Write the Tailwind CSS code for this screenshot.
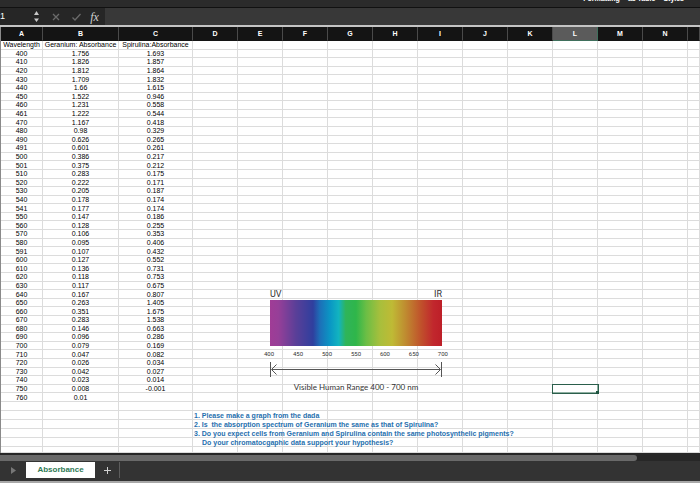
<!DOCTYPE html>
<html lang="en">

<head>
  <meta charset="UTF-8" />
  <meta name="viewport" content="width=device-width, initial-scale=1.0" />
  <title>Absorbance</title>
  <script src="https://cdn.jsdelivr.net/npm/@tailwindcss/browser@4"></script>
</head>

<body class="min-h-screen flex flex-col bg-[#333333] font-['Liberation_Sans',Arial,sans-serif] text-[7px] overflow-x-hidden">

  <!-- Bottom edge of the ribbon -->
  <header class="h-[8px] flex items-end justify-end gap-2 pr-4 pb-1 overflow-hidden bg-[#2b2b2b] border-b border-[#111111] leading-[8px] font-bold text-white">
    <span>Formatting</span>
    <span>as Table</span>
    <span>Styles</span>
  </header>

  <!-- Formula bar -->
  <div class="h-[17px] flex items-stretch bg-[#262626]">
    <input aria-label="Name box" value="1" class="w-7 text-[9px] text-white outline-none" />
    <button aria-label="Open name list" class="w-4 flex items-center justify-center">
      <svg class="w-[5px] h-[13px]" viewBox="0 0 5 13" fill="#c9c9c9">
        <path d="M2.5 1 5 5H0zM2.5 12 0 8.500h5z" />
      </svg>
    </button>
    <button aria-label="Cancel" class="w-6 flex items-center justify-center">
      <svg class="w-2 h-2" viewBox="0 0 8 8" stroke="#6a6a6a" stroke-width="1.300">
        <path d="M1 1l6 6M7 1L1 7" />
      </svg>
    </button>
    <button aria-label="Enter" class="w-4 flex items-center justify-center">
      <svg class="w-[9px] h-2" viewBox="0 0 9 8" fill="none" stroke="#6a6a6a" stroke-width="1.300">
        <path d="M.5 4.500 3 7l5.500-6" />
      </svg>
    </button>
    <button aria-label="Insert function" class="w-[21px] text-[12px] leading-[14px] italic font-['Liberation_Serif',serif] text-[#d0d0d0]">fx</button>
    <input aria-label="Formula" class="flex-1 min-w-0 bg-[#383838] outline-none" />
  </div>

  <!-- Worksheet -->
  <main class="relative bg-white border-t-2 border-[#c4c4c4] overflow-hidden">
    <table class="w-full h-[426px] table-fixed border-separate border-spacing-0 border-l border-[#8a8a8a] text-center text-black leading-[7px]">
      <colgroup>
        <col class="w-[42px]" />
        <col class="w-[76px]" />
        <col class="w-[74px]" />
        <col class="w-[45px]" span="11" />
        <col />
      </colgroup>
      <thead id="columnHeads" class="text-white"></thead>
      <tbody id="sheetRows"></tbody>
    </table>

    <!-- Spectrum chart floating over the cells -->
    <figure class="absolute left-[264px] top-[261px] w-[184px] font-['Roboto',sans-serif] text-[#333333]">
      <div class="flex justify-between px-1.5 text-[9px] leading-[12px]">
        <span>UV</span>
        <span>IR</span>
      </div>
      <div class="mx-1.5 h-[46px] bg-[linear-gradient(90deg,#a03c96_0%,#963f98_5%,#5a3f98_15%,#2f3f9e_25%,#1d6fb8_29%,#0a97c4_35%,#12b4c0_40%,#2fb45a_44%,#2fb64a_50%,#6cbe45_56%,#a8bf3c_64%,#bfba35_71%,#bf8a30_79%,#c0502b_88%,#c1272d_95%,#bd1f28_100%)]"></div>
      <div class="mt-1 flex justify-between text-[6px] leading-[8px]">
        <span>400</span>
        <span>450</span>
        <span>500</span>
        <span>550</span>
        <span>600</span>
        <span>650</span>
        <span>700</span>
      </div>
      <svg class="mt-1 mx-1.5 w-[172px] h-[15px]" viewBox="0 0 172 15" fill="none" stroke="#555555">
        <path d="M.5 0v15M171.500 0v15M2 7.500h168M6.500 2.500l-5 5 5 5M165.500 2.500l5 5-5 5" />
      </svg>
      <figcaption class="mt-1 text-center font-['Lato',sans-serif] text-[8px] leading-[12px] whitespace-nowrap">Visible Human Range 400 - 700 nm</figcaption>
    </figure>

    <!-- Assignment questions -->
    <ol class="absolute left-[194px] top-[384px] font-bold text-[7px] leading-[9px] text-[#1f6fae]">
      <li class="whitespace-pre">1. Please make a graph from the dada</li>
      <li class="whitespace-pre">2. Is  the absorption spectrum of Geranium the same as that of Spirulina?</li>
      <li class="whitespace-pre">3. Do you expect cells from Geranium and Spirulina contain the same photosynthelic pigments?</li>
      <li class="whitespace-pre pl-2">Do your chromatocgaphic data support your hypothesis?</li>
    </ol>
  </main>

  <!-- Horizontal scrollbar -->
  <div class="h-[8px] pt-0.5 bg-[#272727]">
    <div class="h-1.5 w-[91%] rounded-r-full bg-[#696969]"></div>
  </div>

  <!-- Sheet tabs -->
  <footer class="flex-1 flex items-start pt-px bg-[#333333] border-b-2 border-[#a8a8a8]">
    <button aria-label="Next sheet" class="w-[26px] h-4 flex items-center justify-center">
      <svg class="w-[5px] h-[7px]" viewBox="0 0 5 7" fill="#777777">
        <path d="M0 0l5 3.500L0 7z" />
      </svg>
    </button>
    <button class="h-4 w-[69px] bg-white text-[8px] font-bold text-[#2f7a55]">Absorbance</button>
    <button aria-label="Add sheet" class="h-4 w-6 flex items-center justify-center">
      <svg class="w-[7px] h-[7px]" viewBox="0 0 7 7" stroke="#d0d0d0">
        <path d="M3.500 0v7M0 3.500h7" />
      </svg>
    </button>
    <span class="h-4 border-l border-[#5c5c5c]"></span>
  </footer>

  <script>
    const columns = ["A", "B", "C", "D", "E", "F", "G", "H", "I", "J", "K", "L", "M", "N", ""];

    // Wavelength, Geranium, Spirulina
    const readings = [
      ["400", "1.756", "1.693"], ["410", "1.826", "1.857"], ["420", "1.812", "1.864"],
      ["430", "1.709", "1.832"], ["440", "1.66", "1.615"], ["450", "1.522", "0.946"],
      ["460", "1.231", "0.558"], ["461", "1.222", "0.544"], ["470", "1.167", "0.418"],
      ["480", "0.98", "0.329"], ["490", "0.626", "0.265"], ["491", "0.601", "0.261"],
      ["500", "0.386", "0.217"], ["501", "0.375", "0.212"], ["510", "0.283", "0.175"],
      ["520", "0.222", "0.171"], ["530", "0.205", "0.187"], ["540", "0.178", "0.174"],
      ["541", "0.177", "0.174"], ["550", "0.147", "0.186"], ["560", "0.128", "0.255"],
      ["570", "0.106", "0.353"], ["580", "0.095", "0.406"], ["591", "0.107", "0.432"],
      ["600", "0.127", "0.552"], ["610", "0.136", "0.731"], ["620", "0.118", "0.753"],
      ["630", "0.117", "0.675"], ["640", "0.167", "0.807"], ["650", "0.263", "1.405"],
      ["660", "0.351", "1.675"], ["670", "0.283", "1.538"], ["680", "0.146", "0.663"],
      ["690", "0.096", "0.286"], ["700", "0.079", "0.169"], ["710", "0.047", "0.082"],
      ["720", "0.026", "0.034"], ["730", "0.042", "0.027"], ["740", "0.023", "0.014"],
      ["750", "0.008", "-0.001"], ["760", "0.01", ""]
    ];

    const rows = [["Wavelength", "Geranium: Absorbance", "Spirulina:Absorbance"], ...readings];
    const selected = { column: "L", row: 40 };

    // Column letters
    const headRow = document.createElement("tr");
    headRow.className = "h-[14px]";
    columns.forEach(letter => {
      const th = document.createElement("th");
      th.className = letter === selected.column
        ? "p-0 bg-[#5b5b5b] border-r border-b border-[#3f6f5c]"
        : "p-0 bg-[#141414] border-r border-b border-r-[#4a4a4a] border-b-[#141414]";
      th.textContent = letter;
      headRow.appendChild(th);
    });
    document.getElementById("columnHeads").appendChild(headRow);

    /**
     * Adds one row of cells to the sheet.
     */
    function addRow(values, rowIndex, rowClass) {
      const tr = document.createElement("tr");
      tr.className = rowClass;
      columns.forEach((letter, i) => {
        const td = document.createElement("td");
        td.className = "p-0 border-r border-b border-[#dcdcdc] whitespace-nowrap";
        td.textContent = values[i] || "";
        if (letter === selected.column && rowIndex === selected.row) {
          td.className = "relative p-0 outline-1 outline-[#2b5f4c] border-r border-b border-[#8fb0a2]";
          td.innerHTML = '<span class="absolute -right-0.5 -bottom-0.5 size-[3px] bg-[#1f5541]"></span>';
        }
        tr.appendChild(td);
      });
      document.getElementById("sheetRows").appendChild(tr);
    }

    rows.forEach((values, i) => addRow(values, i, ""));

    // Empty rows under the data
    for (let i = 0; i < 5; i++) {
      addRow([], rows.length + i, "h-[9px]");
    }
    addRow([], rows.length + 5, "h-[6px]");
  </script>

</body>

</html>
